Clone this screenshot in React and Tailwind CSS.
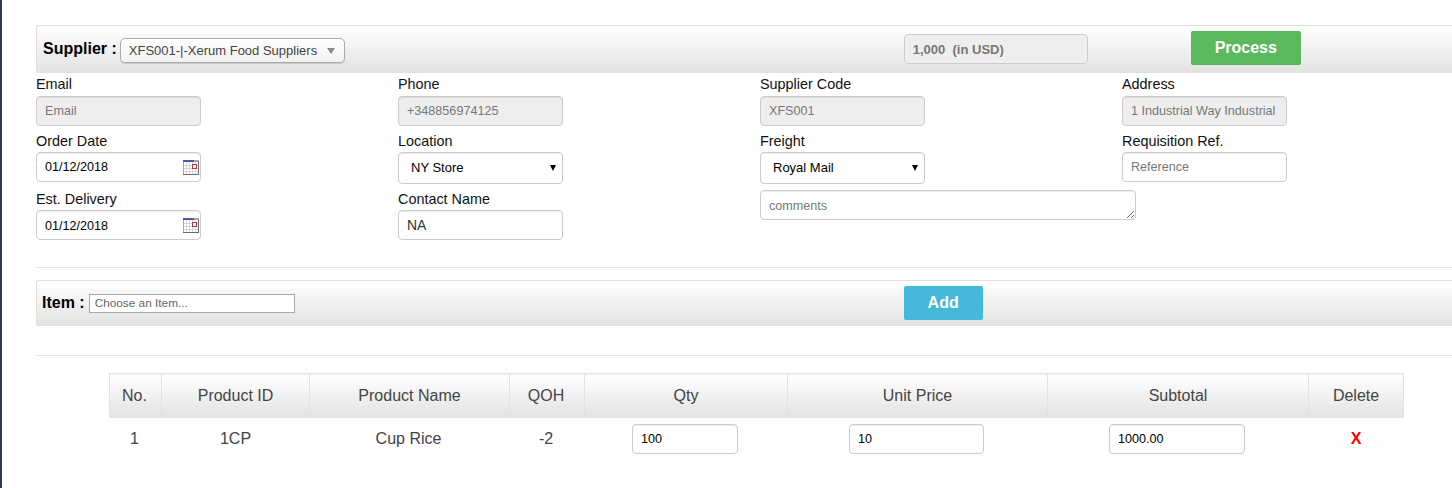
import React from 'react';

const fieldBase = 'block h-[30px] w-[165px] rounded-[4px] border border-[#ccc] px-2 text-[12.6px] text-[#333] shadow-[inset_0_1px_1px_rgba(0,0,0,0.075)] outline-none placeholder:text-[#777]';
const selectBase = 'block h-8 w-[165px] appearance-none rounded-[4px] border border-[#ccc] bg-white pl-3 text-[13px] text-black shadow-[inset_0_1px_1px_rgba(0,0,0,0.075)] outline-none';
const barBase = 'flex rounded-l-[3px] border border-r-0 border-[#e0e0e0] bg-gradient-to-b from-white to-[#e3e3e3]';

const CalendarIcon = () => (
  <svg className="absolute right-[2px] top-[8px]" width="16" height="15" viewBox="0 0 16 15">
    <rect x="0" y="0" width="16" height="15" fill="#fff" />
    <path d="M0 5.5h15M0 8.5h15M0 11.5h15M3.5 2v12M6.5 2v12M9.5 2v12M12.5 2v12" stroke="#d6d6d6" />
    <rect x="0" y="0" width="11" height="2" fill="#4f55a8" />
    <rect x="11" y="0" width="5" height="2" fill="#a6a6a6" />
    <rect x="9.5" y="4.5" width="4" height="4" fill="#fff" stroke="#a83a3a" />
    <path d="M0 14.5h16M15.5 2v13" stroke="#6a6a6a" />
    <path d="M0.5 2v12" stroke="#a6a6a6" />
  </svg>
);

const Field = ({ label, first, children }) => (
  <div className="mb-[5px]">
    <label className={`block h-5 text-[14.4px] leading-5 text-[#111] ${first ? 'mb-[2px]' : 'mb-px'}`}>{label}</label>
    {children}
  </div>
);

const TextField = ({ label, placeholder }) => (
  <Field label={label} first>
    <input className={`${fieldBase} bg-[#eee]`} placeholder={placeholder} disabled />
  </Field>
);

const DateField = ({ value, low }) => (
  <div className="relative h-[32px] w-[165px]">
    <input className={`${fieldBase} bg-white !text-black ${low ? 'pt-[2px]' : ''}`} defaultValue={value} />
    <CalendarIcon />
  </div>
);

const SelectField = ({ value }) => (
  <div className="relative w-[165px]">
    <select className={selectBase} defaultValue={value}>
      <option>{value}</option>
    </select>
    <span className="absolute right-[7px] top-[13px] h-0 w-0 border-x-[3px] border-t-[6px] border-x-transparent border-t-black" />
  </div>
);

const Th = ({ width, nudge, children }) => (
  <th style={{ width }} className={`h-[44px] border border-[#e2e2e2] bg-gradient-to-b from-white to-[#e3e3e3] p-0 text-center text-[16px] font-normal text-[#444] ${nudge ? 'pr-[2px]' : ''}`}>
    {children}
  </th>
);

const CellInput = ({ value, width }) => (
  <input
    style={{ width }}
    className="h-[30px] rounded-[4px] border border-[#ccc] bg-white px-2 text-[12.6px] text-black shadow-[inset_0_1px_1px_rgba(0,0,0,0.075)] outline-none"
    defaultValue={value}
  />
);

const App = () => {
  return (
    <div className="h-[488px] w-[1452px] overflow-hidden border-l-2 border-[#2f3b4c] bg-white pl-[34px] pt-[25px] [font-family:'Liberation_Sans',Arial,sans-serif]">
      <div className={`${barBase} h-[48px] items-center`}>
        <span className="ml-[6px] text-[16px] font-bold text-black">Supplier :</span>
        <div className="ml-[3px] mt-[2px] flex h-[25px] w-[225px] items-center justify-between rounded-[5px] border border-[#aaa] bg-gradient-to-b from-white to-[#f2f2f2] pl-2 pr-[9px] pt-[2px] shadow-[0_1px_1px_rgba(0,0,0,0.15)]">
          <span className="text-[13px] text-[#444]">XFS001-|-Xerum Food Suppliers</span>
          <span className="h-0 w-0 border-x-[4px] border-t-[6px] border-x-transparent border-t-[#888]" />
        </div>
        <input
          className="ml-[559px] h-[30px] w-[184px] rounded-[4px] border border-[#ccc] bg-[#eee] px-2 text-[13px] font-bold text-[#777] outline-none"
          defaultValue="1,000  (in USD)"
          disabled
        />
        <button className="mb-[2px] ml-[103px] h-[34px] w-[110px] rounded-[2px] bg-[#5cb85c] text-[16px] font-bold text-white">Process</button>
      </div>

      <div className="mt-[1px] grid h-[194px] grid-cols-[362px_362px_362px_330px] border-b border-[#e6e6e6]">
        <div>
          <TextField label="Email" placeholder="Email" />
          <Field label="Order Date"><DateField value="01/12/2018" /></Field>
          <Field label="Est. Delivery"><DateField value="01/12/2018" low /></Field>
        </div>
        <div>
          <TextField label="Phone" placeholder="+348856974125" />
          <Field label="Location"><SelectField value="NY Store" /></Field>
          <Field label="Contact Name">
            <input className={`${fieldBase} bg-white !text-[14px]`} defaultValue="NA" />
          </Field>
        </div>
        <div>
          <TextField label="Supplier Code" placeholder="XFS001" />
          <Field label="Freight"><SelectField value="Royal Mail" /></Field>
          <textarea
            className="mt-[6px] block h-[30px] w-[376px] rounded-[4px] border border-[#ccc] bg-white px-2 py-[6px] text-[12.6px] leading-[18px] text-[#333] shadow-[inset_0_1px_1px_rgba(0,0,0,0.075)] outline-none placeholder:text-[#777]"
            placeholder="comments"
          />
        </div>
        <div>
          <TextField label="Address" placeholder="1 Industrial Way Industrial" />
          <Field label="Requisition Ref.">
            <input className={`${fieldBase} bg-white`} placeholder="Reference" />
          </Field>
        </div>
      </div>

      <div className={`${barBase} mt-[12px] h-[46px] items-center`}>
        <span className="ml-[5px] text-[16px] font-bold text-black">Item :</span>
        <input
          className="ml-[4px] h-[19px] w-[206px] border border-[#aaa] bg-white px-[5px] text-[11.8px] text-[#444] outline-none placeholder:text-[#666]"
          placeholder="Choose an Item..."
        />
        <button className="ml-[609px] h-[34px] w-[79px] rounded-[2px] bg-[#46b8da] text-[16px] font-bold text-white">Add</button>
      </div>

      <div className="mt-[29px] border-t border-[#e6e6e6] pl-[73px] pt-[17px]">
        <table className="w-[1294px] table-fixed border-collapse text-[#444]">
          <thead>
            <tr>
              <Th width={52} nudge>No.</Th>
              <Th width={148}>Product ID</Th>
              <Th width={200}>Product Name</Th>
              <Th width={75} nudge>QOH</Th>
              <Th width={203}>Qty</Th>
              <Th width={260}>Unit Price</Th>
              <Th width={261}>Subtotal</Th>
              <Th width={95}>Delete</Th>
            </tr>
          </thead>
          <tbody>
            <tr className="h-[43px] bg-[#fefefe] text-center text-[16px]">
              <td className="pr-[2px]">1</td>
              <td>1CP</td>
              <td className="pr-[2px]">Cup Rice</td>
              <td className="pr-[2px]">-2</td>
              <td className="pr-[2px]"><CellInput value="100" width={106} /></td>
              <td className="pr-[2px]"><CellInput value="10" width={135} /></td>
              <td className="pr-[2px]"><CellInput value="1000.00" width={136} /></td>
              <td className="font-bold text-[#f00]">X</td>
            </tr>
          </tbody>
        </table>
      </div>
    </div>
  );
};

export default App;
